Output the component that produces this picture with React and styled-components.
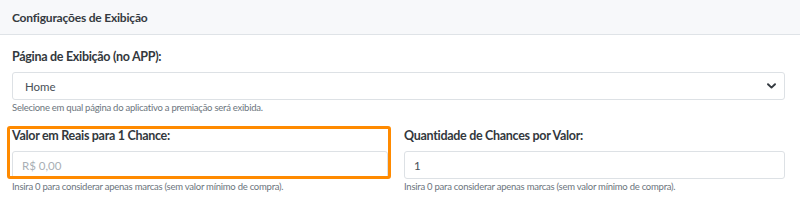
import React from "react";
import styled, { createGlobalStyle } from "styled-components";

const Global = createGlobalStyle`
  html, body { margin: 0; padding: 0; background: #fff; }
  body { font-family: "Lato", "Liberation Sans", sans-serif; color: #343a40; }
  * { box-sizing: border-box; }
`;

const Card = styled.div`
  width: 800px;
  background: #fff;
`;

const CardHeader = styled.div`
  height: 35px;
  background: #f7f8fa;
  border-bottom: 1px solid #dfe3e7;
  display: flex;
  align-items: center;
  padding: 0 12px;
`;

const Title = styled.h3`
  margin: 0;
  font-size: 12px;
  font-weight: 700;
  color: #343a40;
  letter-spacing: -0.2px;
`;

const CardBody = styled.div`
  padding: 13px 15px 20px 12px;
  display: flex;
  flex-direction: column;
`;

const Row = styled.div`
  display: grid;
  grid-template-columns: 376px 1fr;
  column-gap: 16px;
  margin-top: 12px;
`;

const Group = styled.div`
  display: flex;
  flex-direction: column;
`;

const Highlight = styled.div`
  position: relative;
  display: flex;
  flex-direction: column;
  &::after {
    content: "";
    position: absolute;
    top: -1px;
    left: -5px;
    right: -3px;
    bottom: 0;
    border: 3px solid #ff8a00;
    border-radius: 3px;
    pointer-events: none;
  }
`;

const Label = styled.label`
  font-size: 12.5px;
  line-height: 18px;
  font-weight: 700;
  color: #33383d;
  margin-bottom: 6px;
  letter-spacing: -0.3px;
`;

const SelectWrap = styled.div`
  height: 28px;
  border: 1px solid #dde1e5;
  border-radius: 3px;
  display: flex;
  align-items: center;
  padding: 0 8px 0 12px;
  font-size: 11.5px;
  color: #495057;
`;

const SelectValue = styled.span`
  flex: 1;
`;

const Field = styled.div`
  height: 28px;
  border: 1px solid #dde1e5;
  border-radius: 3px;
  display: flex;
  align-items: center;
  padding: 0 9px;
  font-size: 11.5px;
  color: ${(p) => (p.$placeholder ? "#a9afb5" : "#495057")};
`;

const Help = styled.small`
  display: block;
  font-size: 9.5px;
  line-height: 14px;
  margin-top: 1px;
  color: #6c757d;
  letter-spacing: -0.25px;
`;

const Chevron = () => (
  <svg width="9" height="6" viewBox="0 0 9 6">
    <path d="M1 1.2 L4.5 4.6 L8 1.2" fill="none" stroke="#343a40" strokeWidth="1.9" strokeLinecap="round" strokeLinejoin="round" />
  </svg>
);

export default function App() {
  return (
    <Card>
      <Global />
      <CardHeader>
        <Title>Configurações de Exibição</Title>
      </CardHeader>
      <CardBody>
        <Group>
          <Label>Página de Exibição (no APP):</Label>
          <SelectWrap>
            <SelectValue>Home</SelectValue>
            <Chevron />
          </SelectWrap>
          <Help>Selecione em qual página do aplicativo a premiação será exibida.</Help>
        </Group>
        <Row>
          <Group>
            <Highlight>
              <Label>Valor em Reais para 1 Chance:</Label>
              <Field $placeholder>R$ 0,00</Field>
            </Highlight>
            <Help>Insira 0 para considerar apenas marcas (sem valor mínimo de compra).</Help>
          </Group>
          <Group>
            <Label>Quantidade de Chances por Valor:</Label>
            <Field>1</Field>
            <Help>Insira 0 para considerar apenas marcas (sem valor mínimo de compra).</Help>
          </Group>
        </Row>
      </CardBody>
    </Card>
  );
}
